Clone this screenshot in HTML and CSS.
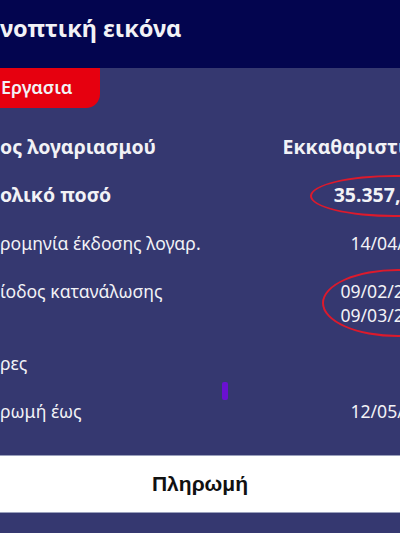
FILE: index.html
```html
<!DOCTYPE html>
<html lang="el">
<head>
	<meta charset="UTF-8">
	<title>Συνοπτική εικόνα</title>
	<meta name="viewport" content="width=device-width, initial-scale=1.0">
	<link rel="stylesheet" href="styles.css">
</head>
<body>

	<div id="header">
		<h1>νοπτική εικόνα</h1>
	</div>
	<div id="tabs">
		<span class="tab">Εργασια</span>
	</div>
	<div id="main">
		<div class="row strong">
			<span>ος λογαριασμού</span>
			<span class="value wide">Εκκαθαριστικό</span>
		</div>
		<div class="row strong">
			<span>ολικό ποσό</span>
			<span class="value circled amount">35.357,38 €</span>
		</div>
		<div class="row">
			<span>ρομηνία έκδοσης λογαρ.</span>
			<span class="value">14/04/2023</span>
		</div>
		<div class="row">
			<span>ίοδος κατανάλωσης</span>
			<span class="value circled dates">09/02/2023<br>09/03/2023</span>
		</div>
		<div class="row">
			<span>ρες</span>
			<span class="mark"></span>
		</div>
		<div class="row">
			<span>ρωμή έως</span>
			<span class="value">12/05/2023</span>
		</div>
	</div>
	<div id="pay">
		<button>Πληρωμή</button>
	</div>

</body>
</html>
```

FILE: styles.css
```css
html, body {
	margin: 0;
	padding: 0;
}
body {
	background: #353870;
	color: #f2f2f6;
	font-family: "Noto Sans", "DejaVu Sans", sans-serif;
	height: 533px;
	overflow: hidden;
	width: 400px;
}
#header {
	background: #03054f;
	height: 68px;
	display: flex;
	align-items: center;
}
#header h1 {
	font-size: 23.5px;
	font-weight: 700;
	margin: 0;
	padding-bottom: 12px;
	white-space: nowrap;
}
#tabs {
	display: flex;
	height: 40px;
}
#tabs .tab {
	background: #e6000f;
	border-bottom-right-radius: 14px;
	box-sizing: border-box;
	display: flex;
	align-items: center;
	font-size: 18px;
	font-weight: 600;
	padding: 0 0 2px 1px;
	width: 100px;
}
#main {
	display: flex;
	flex-direction: column;
	gap: 24px;
	padding-top: 27px;
	width: 444px;
}
.row {
	display: flex;
	align-items: flex-start;
	justify-content: space-between;
	font-size: 17.6px;
	line-height: 24px;
	position: relative;
	white-space: nowrap;
}
.row.strong {
	font-size: 19.5px;
	font-weight: 700;
}
.value {
	position: relative;
}
.value.wide {
	margin-right: 14px;
}
.circled::after {
	border: 2.5px solid #dc1a2c;
	border-radius: 50%;
	content: "";
	position: absolute;
}
.amount {
	margin-right: 5px;
}
.amount::after {
	left: -24px;
	right: -40px;
	top: -8px;
	bottom: -10px;
}
.dates {
	margin-right: 10px;
}
.dates::after {
	left: -18px;
	right: -40px;
	top: -10px;
	bottom: -10px;
}
.mark {
	background: #6a10d2;
	border-radius: 2px;
	height: 18px;
	left: 222px;
	position: absolute;
	top: 31px;
	width: 6px;
}
#pay {
	margin-top: 32px;
}
#pay button {
	background: #fff;
	border: 0;
	border-top: 1px solid #9aa0bc;
	border-bottom: 1px solid #9aa0bc;
	color: #111;
	display: block;
	font-family: "Liberation Sans", Arial, sans-serif;
	font-size: 21px;
	font-weight: 700;
	height: 58px;
	width: 100%;
}
```
